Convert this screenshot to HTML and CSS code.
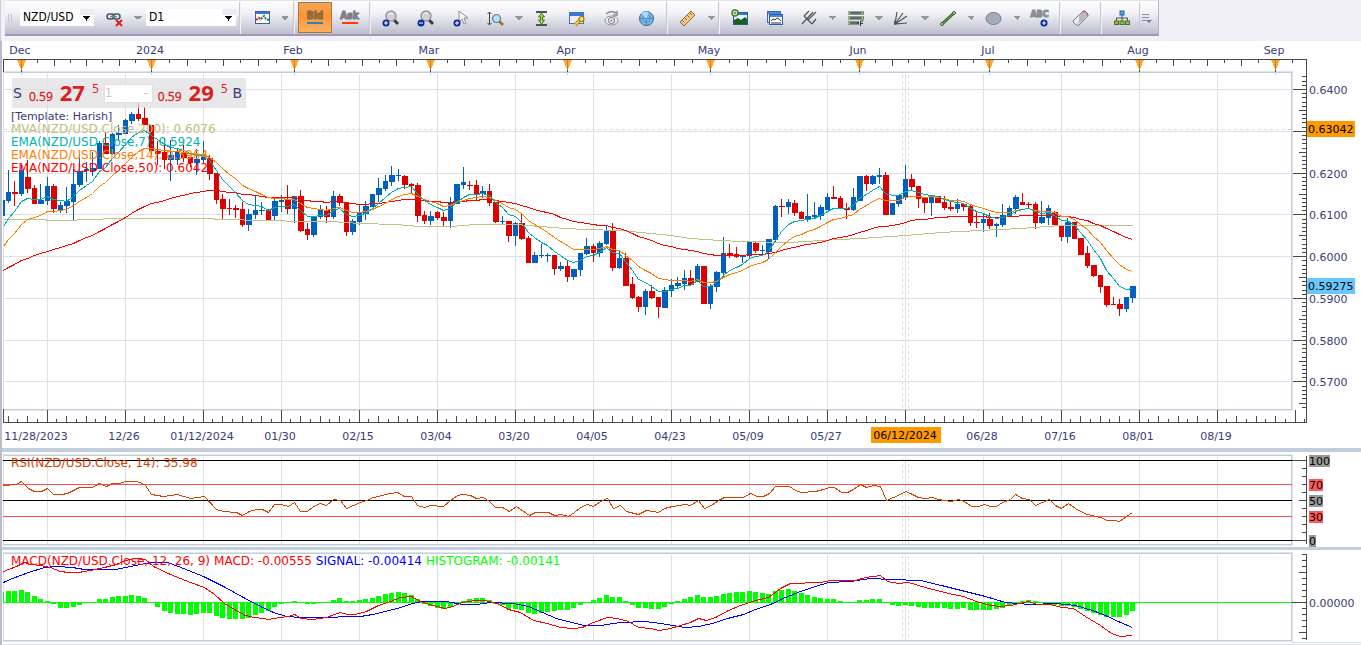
FILE: index.html
```html
<!DOCTYPE html>
<html lang="en">
<head>
<meta charset="utf-8">
<title>NZD/USD D1</title>
<link rel="stylesheet" href="styles.css">
</head>
<body>
<header class="topbar">
<div class="toolbar" role="toolbar" aria-label="Chart tools">
  <span class="grip"></span>
  <select class="picker picker-symbol" aria-label="Symbol"><option>NZD/USD</option></select>
  <button class="tool" aria-label="Unlink"><svg width="20" height="20" viewBox="0 0 20 20"><g fill="none" stroke="#41586a" stroke-width="1.500"><rect x="2" y="6" width="7" height="5" rx="2.500"/><rect x="8" y="6" width="7" height="5" rx="2.500"/></g><path d="M5 8.500h7" stroke="#6e8898" stroke-width="1.500"/><path d="M11 12l6 6M17 12l-6 6" stroke="#e02020" stroke-width="2"/></svg></button>
  <button class="more" aria-label="Link options"></button>
  <select class="picker picker-period" aria-label="Period"><option>D1</option></select>
  <span class="sep wide"></span>
  <button class="tool" aria-label="Chart type"><svg width="20" height="20" viewBox="0 0 20 20"><rect x="3.500" y="3.500" width="14" height="12" fill="#fff" stroke="#41619c"/><path d="M4 4h13v2H4z" fill="#3a78d8"/><path d="M4 12l3-2 2 2" fill="none" stroke="#d02020" stroke-width="2" stroke-dasharray="2 1"/><path d="M9 11l3-3 2 3 3 1" fill="none" stroke="#207030" stroke-width="2" stroke-dasharray="2 1"/></svg></button>
  <button class="more" aria-label="Chart type options"></button>
  <span class="sep wide"></span>
  <button class="side side-on bid">Bid</button>
  <button class="side ask">Ask</button>
  <span class="sep"></span>
  <button class="tool" aria-label="Zoom in"><svg width="20" height="20" viewBox="0 0 20 20"><path d="M12 11l5 5" stroke="#3c3c40" stroke-width="3"/><circle cx="10" cy="8" r="5" fill="#d2d2d4" stroke="#98989c" stroke-width="1.500"/><path d="M7 7q2-3 5-1" stroke="#f4f4f4" fill="none"/><circle cx="5" cy="15" r="3.500" fill="#0a2c98"/><path d="M3 15h4M5 13v4" stroke="#fff"/></svg></button>
  <button class="tool" aria-label="Zoom out"><svg width="20" height="20" viewBox="0 0 20 20"><path d="M12 11l5 5" stroke="#3c3c40" stroke-width="3"/><circle cx="10" cy="8" r="5" fill="#d2d2d4" stroke="#98989c" stroke-width="1.500"/><path d="M7 7q2-3 5-1" stroke="#f4f4f4" fill="none"/><circle cx="5" cy="15" r="3.500" fill="#0a2c98"/><path d="M3 15h4" stroke="#fff"/></svg></button>
  <button class="tool" aria-label="Add pointer"><svg width="20" height="20" viewBox="0 0 20 20"><path d="M8 3v11l3-3 2 5 2-1-2-5h4z" fill="#f4f4f6" stroke="#8e8e96"/><circle cx="6" cy="15" r="3.500" fill="#0a2c98"/><path d="M4 15h4M6 13v4" stroke="#fff"/></svg></button>
  <button class="tool" aria-label="Vertical zoom"><svg width="20" height="20" viewBox="0 0 20 20"><path d="M3.500 5v11M1.500 6l2-2 2 2M1.500 15l2 2 2-2" fill="none" stroke="#404048"/><path d="M13 13l4 4" stroke="#b06a20" stroke-width="2.500"/><circle cx="10.500" cy="10.500" r="4" fill="#b8e0f8" stroke="#52809c" stroke-width="1.200"/></svg></button>
  <button class="more" aria-label="Zoom options"></button>
  <button class="tool" aria-label="Fit height"><svg width="20" height="20" viewBox="0 0 20 20"><path d="M4 4h11M4 17h11" stroke="#48545c" stroke-width="2"/><path d="M9.500 5l3 4h-2v3h2l-3 4-3-4h2V9h-2z" fill="#a4dc40" stroke="#3c7a1c"/></svg></button>
  <button class="tool" aria-label="Chart settings"><svg width="20" height="20" viewBox="0 0 20 20"><rect x="2.500" y="4.500" width="14" height="11" fill="#e8f0fc" stroke="#4c70b0"/><path d="M3 5h13v3H3z" fill="#3a78d8"/><path d="M8 17l6-6" stroke="#a87400" stroke-width="3.500"/><path d="M8 17l6-6" stroke="#f8c840" stroke-width="2"/><circle cx="14.500" cy="11" r="2.500" fill="#fae080" stroke="#a87400" stroke-width="1.200"/></svg></button>
  <button class="tool" aria-label="Refresh view"><svg width="20" height="20" viewBox="0 0 20 20"><path d="M4 6q5-4 10-1M15 3v4h-4" fill="none" stroke="#8a8a90" stroke-width="1.500"/><ellipse cx="9.500" cy="12.500" rx="6.500" ry="4.500" fill="#ececee" stroke="#909096"/><circle cx="9.500" cy="12.500" r="3" fill="none" stroke="#909096" stroke-width="1.200"/><circle cx="9.500" cy="12.500" r="1" fill="#808086"/></svg></button>
  <button class="tool" aria-label="Scanner"><svg width="20" height="20" viewBox="0 0 20 20"><circle cx="9.500" cy="10.500" r="7" fill="#7cbae8" stroke="#2c6094"/><g fill="none" stroke="#4a8cc0"><circle cx="9.500" cy="10.500" r="4"/><path d="M2.500 10.500h14M9.500 3.500v14"/></g><path d="M9.500 10.500L4.500 5.500q3-3 7-1.500z" fill="#b4dcf8"/></svg></button>
  <span class="sep"></span>
  <button class="tool" aria-label="Ruler"><svg width="20" height="20" viewBox="0 0 20 20"><path d="M2 14l11-11 4 4-11 11z" fill="#f0cc88" stroke="#946a2c"/><path d="M7 10l2 2M9.500 7.500l2 2M12 5l2 2M4.500 12.500l2 2" stroke="#7c5820"/></svg></button>
  <button class="more" aria-label="Ruler options"></button>
  <span class="sep"></span>
  <button class="tool" aria-label="Add picture"><svg width="20" height="20" viewBox="0 0 20 20"><rect x="3.500" y="4.500" width="14" height="12" fill="#e4f2ff" stroke="#2a5898"/><path d="M4 5h13v2H4z" fill="#3a78d8"/><path d="M4 16v-4l4-2 3 2 4-3 2 2v5z" fill="#186018"/><circle cx="5" cy="5" r="3" fill="#fff" stroke="#3c8420" stroke-width="1.500"/><path d="M3.500 5h3M5 3.500v3" stroke="#3c8420"/></svg></button>
  <button class="tool" aria-label="Chart windows"><svg width="20" height="20" viewBox="0 0 20 20"><rect x="2.500" y="3.500" width="13" height="11" fill="#dcebfc" stroke="#3a68b4"/><rect x="4.500" y="6.500" width="13" height="10" fill="#fff" stroke="#2c5cac"/><path d="M3 4h12v2H3zM5 7h12v2H5z" fill="#4a88e0"/><path d="M6 13l2-2 2 1 2-2 2 1 2 2M6 15h10" fill="none" stroke="#303038"/></svg></button>
  <button class="tool" aria-label="Pitchfork"><svg width="20" height="20" viewBox="0 0 20 20"><path d="M2 16L13 4M4 8l8 8M4 8l5-5M12 16l4-5M8 12l8-8" fill="none" stroke="#50545c" stroke-width="1.300"/></svg></button>
  <button class="more" aria-label="Pitchfork options"></button>
  <button class="tool" aria-label="Fibonacci lines"><svg width="20" height="20" viewBox="0 0 20 20"><path d="M2 5h16M2 10h16M2 15h11" stroke="#404a44" stroke-width="3"/><path d="M4 5h12M4 10h12M4 15h7" stroke="#7c9080"/><g fill="#b8e860"><circle cx="3" cy="5" r="1"/><circle cx="16.500" cy="5" r="1"/><circle cx="3" cy="10" r="1"/><circle cx="16.500" cy="10" r="1"/><circle cx="3" cy="15" r="1"/></g><path d="M14.500 18v-5h3M14.500 15.500h2.500" fill="none" stroke="#303038"/></svg></button>
  <button class="more" aria-label="Fibonacci options"></button>
  <button class="tool" aria-label="Fan"><svg width="20" height="20" viewBox="0 0 20 20"><path d="M3 16L5 4M3 16l8-11M3 16L15 8M3 16l12-1" fill="none" stroke="#50545c" stroke-width="1.200"/><path d="M2 17v-5l4 4z" fill="#50545c"/></svg></button>
  <button class="more" aria-label="Fan options"></button>
  <button class="tool" aria-label="Line"><svg width="20" height="20" viewBox="0 0 20 20"><path d="M4 16L16 5" stroke="#305c20" stroke-width="3"/><path d="M4 16L16 5" stroke="#84bc50"/><circle cx="4" cy="16" r="1.500" fill="#d0f0a0" stroke="#305c20"/><circle cx="16" cy="5" r="1.500" fill="#d0f0a0" stroke="#305c20"/></svg></button>
  <button class="more" aria-label="Line options"></button>
  <button class="tool" aria-label="Ellipse"><svg width="20" height="20" viewBox="0 0 20 20"><ellipse cx="9.500" cy="10.500" rx="7.500" ry="6" fill="#a2adb8" stroke="#737e8a"/></svg></button>
  <button class="more" aria-label="Shape options"></button>
  <button class="tool label-tool" aria-label="Text label"><span class="abc">ABC</span><svg width="8" height="8" viewBox="0 0 8 8"><circle cx="4" cy="4" r="3.500" fill="#0a2c98"/><path d="M2 4h4M4 2v4" stroke="#fff"/></svg></button>
  <span class="sep"></span>
  <button class="tool" aria-label="Eraser"><svg width="20" height="20" viewBox="0 0 20 20"><path d="M2 13l9-9q2-2 4 0t2 4l-9 9q-2 1-4-1t-2-3z" fill="#ececee" stroke="#7c7c84"/><path d="M8 8l3-4q2-2 4 0t2 4l-4 4-8 5q4-3 3-9z" fill="#b8b8c0"/><path d="M11 4q2-2 4 0t2 4" fill="none" stroke="#a05058"/></svg></button>
  <span class="sep"></span>
  <button class="tool" aria-label="Structure"><svg width="20" height="20" viewBox="0 0 20 20"><path d="M10 6v7M4.500 13v-3h11v3" fill="none" stroke="#505058"/><rect x="8" y="3" width="4" height="4" fill="#4aa4f0" stroke="#2468a8"/><g fill="#90c040" stroke="#4c7020"><rect x="2.500" y="13" width="4" height="3.500"/><rect x="8" y="13" width="4" height="3.500"/><rect x="13.500" y="13" width="4" height="3.500"/></g></svg></button>
  <button class="overflow" aria-label="More tools"><svg width="12" height="12" viewBox="0 0 12 12"><path d="M1 2.500h7M1 5.500h7M1 8.500h4" stroke="#8c8ca4"/><path d="M5 8h6l-3 3z" fill="#74748c"/></svg></button>
</div>
</header>
<main class="terminal">
  <section class="panel panel-price" aria-label="Price chart">
    <svg class="plot" id="price"></svg>
    <div class="overlay">
      <div class="quote">
        <span class="letter">S</span>
        <span class="price"><span class="base">0.59</span><b class="big">27</b><span class="pip">5</span></span>
        <select class="lots" aria-label="Lots"><option>1</option></select>
        <span class="price"><span class="base">0.59</span><b class="big">29</b><span class="pip">5</span></span>
        <span class="letter">B</span>
      </div>
      <div class="legend">
        <span class="navy">[Template: Harish]</span>
        <span class="khaki">MVA(NZD/USD.Close,200): 0.6076</span>
        <span class="teal">EMA(NZD/USD.Close,7): 0.5924</span>
        <span class="orange">EMA(NZD/USD.Close,14): 0.5964</span>
        <span class="red">EMA(NZD/USD.Close,50): 0.6042</span>
      </div>
    </div>
  </section>
  <section class="panel panel-study" aria-label="RSI">
    <svg class="plot" id="rsi"></svg>
    <div class="overlay inline"><span class="rust">RSI(NZD/USD.Close, 14): 35.98</span></div>
  </section>
  <section class="panel panel-study" aria-label="MACD">
    <svg class="plot" id="macd"></svg>
    <div class="overlay inline"><span class="red">MACD(NZD/USD.Close, 12, 26, 9)</span><span class="red">MACD: -0.00555</span><span class="blue">SIGNAL: -0.00414</span><span class="lime">HISTOGRAM: -0.00141</span></div>
  </section>
</main>
<script src="chart.js"></script>
</body>
</html>
```

FILE: styles.css
```css
body {
  margin: 0;
  background: #fff;
  color: #3a3a78;
  font-family: "DejaVu Sans", Verdana, sans-serif;
  font-size: 12px;
  line-height: 13px;
  overflow: hidden;
}
button, select { font: inherit; color: inherit; margin: 0; padding: 0; border: 0; background: none; }
select { appearance: none; border-radius: 0; }

.topbar { display: flex; height: 41px; padding-left: 4px; background: #f0f0f6; box-sizing: border-box; border-left: 1px solid #d0cedc; }
.toolbar {
  display: flex;
  flex: none;
  align-items: center;
  box-sizing: border-box;
  height: 36px;
  padding-right: 4px;
  background: linear-gradient(#fefeff, #f2f2f7 35%, #d6d6e2 70%, #bdbdcd);
  border-top: 1px solid #e4e4ec;
  border-right: 1px solid #b4b2c8;
  border-bottom: 2px solid #9c9ab4;
}
.toolbar button, .toolbar select, .toolbar span { flex: none; }
.grip { width: 9px; height: 8px; margin: 0 3px; background: repeating-linear-gradient(90deg, #c4c4d0 0 1px, transparent 1px 3px) no-repeat 0 0 / 6px 8px; }
.picker {
  height: 17px;
  padding-left: 3px;
  color: #000;
  font-family: "DejaVu Sans Condensed", "DejaVu Sans", sans-serif;
  font-size: 12px;
  line-height: 17px;
  background: linear-gradient(#000, #000) no-repeat right 7px top 8px / 1px 4px,
    linear-gradient(#000, #000) no-repeat right 6px top 7px / 3px 3px,
    linear-gradient(#000, #000) no-repeat right 5px top 7px / 5px 2px,
    linear-gradient(#000, #000) no-repeat right 4px top 7px / 7px 1px,
    linear-gradient(90deg, #ecebf3, #ecebf3) no-repeat right top / 14px 6px,
    #fff;
}
.picker-symbol { width: 74px; margin-right: 3px; }
.picker-period { width: 90px; margin-left: 3px; }
.tool { display: flex; align-items: center; justify-content: center; width: 35px; height: 30px; }
.more { width: 11px; height: 30px; background: conic-gradient(from 315deg at 50% 100%, #96949f 0 90deg, transparent 0) no-repeat center / 8px 4px; }
.sep { width: 6px; height: 32px; background: linear-gradient(90deg, #c6c5d4 1px, #f2f2f8 1px) no-repeat center / 2px 32px; }
.sep.wide { width: 8px; }
.side { width: 35px; height: 31px; color: #a4a4a6; font-family: "DejaVu Sans Condensed", sans-serif; font-weight: bold; font-size: 10px; line-height: 10px; -webkit-text-stroke: 1px #77777b; }
.side::after { content: ""; display: block; height: 2px; width: 16px; margin: 1px auto 0; background: #ff3c00; }
.side-on { width: 34px; box-sizing: border-box; color: #b08050; -webkit-text-stroke-color: #8a6438; background: linear-gradient(#f4a458, #ff9434 45%, #ffb060); border: 1px solid #a87840; }
.side-on::after { background: #1888c8; }
.label-tool { flex-direction: column; }
.abc { color: #9a9aa0; font-size: 8px; line-height: 8px; padding-top: 3px; font-weight: bold; -webkit-text-stroke: 1px #88888e; }
.label-tool svg { margin-left: 8px; }
.overflow { width: 15px; height: 32px; display: flex; align-items: center; justify-content: center; border-left: 1px solid #c6c5d4; }

.terminal { border-left: 2px solid #bcbacd; }
.panel { position: relative; border-bottom: 3px solid #c3cedd; }
.panel-price { height: 407px; border-bottom-width: 4px; }
.panel-study { height: 95px; }
.panel-study:last-child { border-bottom: 0; }
.plot { display: block; width: 100%; height: 100%; font-size: 11px; }
.overlay { position: absolute; left: 9px; top: 37px; }
.inline { top: 5px; display: flex; gap: 4px; white-space: pre; }
.quote { display: flex; align-items: center; gap: 5px; height: 30px; width: 232px; margin-left: 1px; padding: 0 1px; background: rgba(222, 222, 225, .7); }
.letter { width: 11px; font-size: 14px; }
.price { display: flex; align-items: center; color: #d82020; font-family: "Open Sans", "Noto Sans", sans-serif; gap: 7px; }
.base { font-size: 12px; line-height: 12px; padding-top: 8px; -webkit-text-stroke: 0.3px #d82020; }
.big { font-size: 22px; line-height: 26px; padding-bottom: 3px; }
.pip { font-size: 12px; line-height: 12px; padding-bottom: 8px; }
.lots { flex: none; width: 49px; height: 19px; color: #c8c8cc; background: linear-gradient(#ccc, #ccc) no-repeat right 4px center / 4px 1px, #fff; border: 1px solid #e0e0e4; }
.legend { display: flex; flex-direction: column; margin-top: 2px; white-space: pre; }
.navy { color: #3a3a78; }
.khaki { color: #c0c080; }
.teal { color: #00b4b4; }
.orange { color: #ff8000; }
.red { color: #ff0000; }
.rust { color: #d84000; }
.blue { color: #0000ff; }
.lime { color: #00ff00; }
.legend .navy { font-size: 11px; }
```

FILE: chart.js
```js
// Candles: high, body top, body bottom, low (screen rows), direction.
const candles = `200 200 216 216 u|170 192 201 203 u|181 192 194 206 d|165 170 194 196 u|160 177 189 193 d|185 188 204 204 d|184 200 204 204 u
177 186 201 205 u|184 186 209 213 d|202 205 211 213 u|187 201 206 213 u|169 184 202 220 u|154 171 185 187 u|162 169 171 182 u|152 168 171 176 u|141 143 169 169 u|133 143 154 154 d
133 134 154 155 u|125 133 135 141 u|119 120 134 134 u|112 114 121 124 u|103 114 119 121 d|107 118 125 125 d|125 125 151 155 d|141 151 154 165 d|138 152 160 169 d|140 155 160 181 u
149 151 160 165 u|145 152 158 162 d|157 157 163 167 d|149 159 163 175 u|141 157 160 164 u|155 158 174 180 d|173 173 200 204 d|194 199 209 219 d|199 208 209 215 d|205 208 210 218 d
202 209 225 227 d|209 214 225 231 u|196 210 215 219 u|202 210 211 215 u|209 209 220 220 d|198 201 216 221 u|195 200 202 212 u|185 199 209 214 d|196 196 209 223 u|190 196 231 232 d
223 229 235 240 d|216 217 235 237 u|205 210 217 219 u|206 210 217 223 d|191 196 217 219 u|194 196 203 206 d|202 202 232 236 d|219 221 232 235 u|205 212 222 225 u|201 206 214 220 u
194 194 207 207 u|178 188 195 202 u|175 181 189 191 u|166 175 182 186 u|169 175 176 181 u|175 176 185 189 d|183 184 186 193 d|183 185 216 222 d|211 215 221 224 d|211 216 221 225 u
211 212 218 220 d|212 217 221 226 d|197 202 221 228 u|184 184 204 204 u|167 182 185 189 u|181 185 186 190 d|180 185 194 200 d|186 191 194 198 u|184 191 203 206 d|202 202 222 223 d
216 221 222 224 u|221 221 236 242 d|222 223 236 246 u|213 223 239 240 d|236 238 263 263 d|252 255 263 263 u|244 255 256 258 u|253 255 256 262 u|255 255 269 275 d|262 266 269 271 u
260 266 277 282 d|269 269 277 280 u|253 253 270 276 u|238 246 254 255 u|244 246 253 262 d|241 243 253 257 u|225 231 244 245 u|223 231 268 271 d|251 258 268 269 u|253 258 286 286 d
277 284 298 299 d|296 297 307 312 d|289 291 307 315 u|285 291 298 299 d|297 297 307 318 d|287 290 308 308 u|279 285 291 297 u|277 283 286 289 u|270 278 284 290 u|270 278 285 285 d
264 266 282 282 u|266 266 304 304 d|284 286 304 309 u|271 272 287 292 u|237 253 273 277 u|244 253 256 258 d|247 254 257 258 d|255 255 257 263 u|242 242 256 259 u|241 243 251 253 d
245 250 251 254 u|239 239 252 259 u|205 206 240 242 u|199 206 207 217 d|199 202 207 214 u|200 203 213 216 d|211 212 219 219 d|194 216 220 222 u|202 215 217 219 u|205 207 216 220 u
193 197 210 210 u|186 197 199 199 d|196 198 209 209 d|203 208 210 219 d|188 197 210 211 u|176 176 201 201 u|175 176 184 191 d|175 176 184 185 u|168 175 177 184 u|172 175 215 215 d
203 203 215 215 u|195 195 204 207 u|165 179 198 200 u|174 179 187 190 d|186 186 199 208 d|197 197 203 213 d|195 195 203 216 u|196 196 203 203 d|196 202 208 210 d|201 207 209 211 d
199 204 209 213 u|203 204 207 211 d|205 206 223 226 d|212 222 223 228 d|214 219 223 232 u|213 219 226 229 d|223 224 226 237 u|204 215 225 227 u|206 208 216 216 u|195 197 209 214 u
193 202 205 205 d|202 204 205 209 d|202 204 223 229 d|201 217 223 224 u|205 208 218 225 u|211 212 225 225 d|225 225 237 241 d|218 222 237 243 u|222 222 239 239 d|238 238 255 255 d
246 253 266 268 d|265 265 276 277 d|275 275 287 293 d|286 286 305 307 d|297 304 305 305 d|299 304 309 316 d|297 297 309 312 u|286 286 298 303 u`
  .split(/[|\n]/).map(s => { const p = s.trim().split(" "); return { h: +p[0], t: +p[1], b: +p[2], l: +p[3], up: p[4] === "u" }; });

const histogram = [10,11,11,12,10,6,3,1,-1,-5,-5,-4,-2,0,0,3,3,5,6,6,7,6,4,0,-4,-8,-10,-11,-11,-12,-11,-10,-10,-13,-15,-16,-16,-16,-15,-12,-10,-8,-4,-1,0,1,0,-1,-1,0,0,2,
  4,1,1,2,3,4,6,8,9,10,9,7,3,-1,-3,-5,-6,-4,-1,1,3,4,4,2,-1,-2,-6,-6,-7,-10,-11,-10,-9,-8,-7,-7,-5,-2,0,2,4,7,5,5,1,-2,-5,-5,-6,-6,-4,-1,1,3,5,7,5,5,6,8,9,10,
  10,11,10,9,8,11,12,13,11,9,7,5,4,3,3,1,0,0,2,2,3,3,0,-2,-3,-2,-3,-4,-5,-5,-5,-5,-6,-6,-5,-7,-7,-7,-7,-6,-5,-2,0,1,2,1,0,-2,-2,-3,-3,-4,-6,-8,-10,-12,-14,-14,-14,-12,-8];

const mvaPath = "3,219 44,219 48,220 75,220 78,219 128,218 212,218 216,219 270,220 300,221 330,221 360,223 395,224 420,226 450,226 475,224 515,224 540,226 565,228 585,229 620,230 640,232 670,235 690,238 720,240 740,241 790,242 820,240 860,238 905,235 940,232 980,230 1020,228 1060,225 1132,225";
const rsiPath = "3,485 16,484 21,481 28,488 34,491 41,491 47,488 53,494 61,494 67,493 79,487 92,487 99,483 106,486 112,483 119,483 125,481 134,481 140,482 145,485 151,494 163,496 177,494 190,498 204,496 216,509 223,511 236,512 242,515 249,511 256,509 262,509 268,512 274,504 281,504 288,506 294,502 300,511 307,511 313,506 320,503 326,505 333,499 340,500 346,508 360,502 366,500 373,497 390,493 397,492 404,496 411,496 417,505 424,507 430,505 443,506 450,500 457,495 463,494 470,495 476,498 483,497 489,501 495,507 502,507 509,511 516,506 529,515 535,512 548,512 554,515 561,514 568,516 574,512 580,507 587,504 593,506 600,501 607,498 613,508 620,505 626,511 638,514 646,510 658,512 664,508 672,506 685,504 690,505 698,500 704,508 711,505 718,500 724,497 734,497 743,497 750,493 757,496 763,496 769,493 775,486 789,486 795,490 801,492 815,491 823,489 829,487 834,487 841,492 847,492 853,489 860,484 866,487 873,485 880,486 886,500 893,497 900,494 905,491 910,493 918,497 925,498 932,497 938,499 944,500 951,501 958,499 964,501 971,506 978,506 984,504 990,506 996,506 1002,502 1010,499 1015,494 1022,498 1029,499 1035,505 1042,502 1049,499 1055,505 1061,508 1068,503 1075,508 1080,511 1087,514 1100,517 1107,520 1114,520 1119,521 1126,516 1132,512";
const macdPath = "3,571 16,566 24,562 30,564 40,565 50,567 60,571 68,572 78,572 90,570 104,567 116,564 125,560 134,558 145,559 153,566 170,574 190,582 204,587 214,594 224,603 234,609 245,615 254,617 262,618 268,619 279,617 288,616 294,614 301,618 312,619 326,617 334,614 340,612 347,614 355,614 366,611 378,605 390,601 400,597 411,596 420,601 432,605 445,608 452,606 462,602 475,600 484,600 497,603 508,609 520,612 533,620 547,623 560,627 573,628 582,627 593,622 607,617 617,618 628,621 638,627 650,628 659,630 670,628 680,625 690,622 698,618 706,620 715,617 728,610 740,605 755,600 768,597 780,588 790,583 820,582 830,580 855,580 865,577 880,575 887,581 898,583 908,582 925,587 948,593 963,596 976,601 990,605 1000,606 1010,605 1028,601 1037,604 1050,604 1061,607 1073,608 1085,616 1100,625 1111,633 1120,636 1132,635";
const signalPath = "3,582 12,578 28,572 44,567 56,566 72,567 84,569 115,569 125,567 145,563 155,562 167,562 178,566 203,576 223,586 243,597 262,607 273,612 286,616 300,617 330,617 345,616 360,616 372,614 385,611 400,607 412,603 422,601 446,601 462,604 476,604 490,602 513,603 528,606 542,612 556,618 571,622 584,625 600,625 620,622 645,621 660,623 672,625 685,627 698,626 712,623 727,618 743,614 755,609 770,604 785,597 800,591 815,586 828,582 850,581 870,578 890,579 920,580 945,586 965,591 985,596 1005,602 1030,604 1055,603 1075,605 1092,610 1105,615 1120,622 1132,627";

const GRID = "#e0e0e0", AXIS = "#484848", FRAME = "#c3cedd";
const columnX = i => Math.floor(47 + 6.5 * (i - 7));
const columnWidth = i => (i % 2 ? 5 : 6);

const rect = (x, y, w, h, fill) => `<rect x="${x}" y="${y}" width="${w}" height="${h}" fill="${fill}"/>`;
const hline = (x1, x2, y, c) => rect(x1, y, x2 - x1, 1, c);
const vline = (x, y1, y2, c) => rect(x, y1, 1, y2 - y1, c);
const curve = (pts, c) => `<polyline points="${pts}" transform="translate(.5 .5)" fill="none" stroke="${c}"/>`;
const label = (x, y, s, anchor = "start", c = "#3a3a78") => `<text x="${x}" y="${y}" text-anchor="${anchor}" fill="${c}">${s}</text>`;

function dashed(x1, y1, x2, y2) {
  return `<path d="M${x1} ${y1}L${x2} ${y2}" stroke="#dcdcdc" stroke-dasharray="3 3" fill="none"/>`;
}

function frame(right, top, bottom) {
  let s = "";
  for (let x = 47; x < right; x += 78) s += vline(x, top + 2, bottom, GRID);
  s += vline(3, top, bottom, GRID);
  s += hline(3, right + 1, top - 1, "#dfe3ea") + hline(3, right, top, FRAME) + hline(3, right, bottom, FRAME) + hline(3, right + 1, bottom + 1, "#e4e6ee");
  s += vline(right - 1, top, bottom, FRAME) + vline(right, top, bottom + 1, "#e0e0ea");
  return s + dashed(902.5, top + 3, 902.5, bottom) + dashed(908.5, top + 3, 908.5, bottom);
}

function ema(n, seed) {
  const a = 2 / (n + 1);
  let v = seed;
  return candles.map((c, i) => {
    if (i) v += a * ((c.up ? c.t : c.b - 1) - v);
    return `${Math.max(3, columnX(i))},${Math.round(v)}`;
  }).join(" ");
}

function mount(id, top, draw) {
  const svg = document.getElementById(id);
  const w = svg.clientWidth, h = svg.clientHeight;
  svg.setAttribute("viewBox", `2 ${top} ${w} ${h}`);
  const axis = w + 2 - 55;
  svg.innerHTML = `<g shape-rendering="crispEdges">${draw(axis, axis - 14)}</g>`;
}

function drawPrice(axis, right) {
  let s = "";
  const rows = [[89, "0.6400"], [131, ""], [173, "0.6200"], [214, "0.6100"], [256, "0.6000"], [298, "0.5900"], [340, "0.5800"], [381, "0.5700"]];
  for (const [y, t] of rows) {
    s += hline(3, right - 2, y, GRID) + hline(right, axis, y, AXIS);
    if (t) s += label(axis + 3, y + 5, t);
  }
  s += frame(right, 72, 409) + dashed(4, 129.5, right, 129.5);
  for (let i = -3; i < 77; i++) {
    const y = Math.round(89 + i * 4.18);
    if (i % 10) s += hline(axis - (i % 5 ? 4 : 7), axis, y, AXIS);
  }
  s += vline(axis, 59, 423, AXIS) + hline(3, axis + 1, 59, AXIS) + hline(3, axis + 1, 422, AXIS) + vline(3, 59, 72, AXIS) + vline(3, 409, 423, AXIS);

  const months = [[21, "Dec"], [151, "2024"], [294, "Feb"], [430, "Mar"], [567, "Apr"], [710, "May"], [859, "Jun"], [989, "Jul"], [1139, "Aug"], [1275, "Sep"], [1412, ""]];
  months.forEach(([x, t], m) => {
    if (!t) return;
    const step = (months[m + 1][0] - x) / 8;
    for (let j = 1; j < 8; j++) {
      const tx = Math.round(x + step * j);
      if (tx < axis) s += vline(tx, 60, j % 2 ? 63 : 66, AXIS);
    }
    s += `<path d="M${x - 4} 60h9l-4 9h-1z" fill="#ffa830"/>` + vline(x, 60, 70, "#d08020") + vline(x, 70, 72, AXIS) + vline(x, 72, 75, FRAME);
    s += label(x - 1, 54, t, "middle");
  });

  const dates = ["11/28/2023", "12/26", "01/12/2024", "01/30", "02/15", "03/04", "03/20", "04/05", "04/23", "05/09", "05/27", "", "06/28", "07/16", "08/01", "08/19"];
  for (let j = -4; 47 + j * 9.75 < axis; j++) {
    const x = Math.floor(47 + j * 9.75);
    s += vline(x, j % 8 ? (j % 2 ? 419 : 416) : 410, 422, AXIS);
  }
  dates.forEach((t, i) => { s += label(i ? 46 + 78 * i : 36, 440, t, "middle"); });
  s += rect(871, 427, 70, 16, "#ff9900") + label(905, 439, "06/12/2024", "middle", "#000");

  candles.forEach((c, i) => {
    const x = columnX(i), color = c.up ? "#0060c0" : "#dc0000";
    if (i) s += vline(x, c.h, c.l, color);
    const left = Math.max(3, x - 2);
    s += rect(left, c.t, x - 2 + columnWidth(i) - left, c.b - c.t, color);
  });
  s += curve(mvaPath, "#c0c080") + curve(ema(50, 270), "#ff0000") + curve(ema(14, 246), "#ff8000") + curve(ema(7, 226), "#00b0b0");
  s += rect(axis + 1, 121, 48, 16, "#ff9900") + label(axis + 2, 133, "0.63042", "start", "#000");
  s += rect(axis + 1, 278, 48, 16, "#66c8ff") + label(axis + 2, 290, "0.59275", "start", "#000");
  return s;
}

function drawRsi(axis, right) {
  let s = frame(right, 455, 544);
  for (const y of [460, 500, 540]) s += hline(3, right, y, "#000");
  for (const y of [484, 516]) s += hline(3, right, y, "#ff5050");
  s += vline(axis, 456, 544, AXIS);
  for (let y = 460; y <= 540; y += 8) s += hline(y % 80 === 60 ? right : y === 500 ? axis - 7 : axis - 4, axis, y, AXIS);
  s += hline(right, axis, 460, AXIS) + hline(axis - 7, axis, 500, AXIS);
  for (const [y, t, w, c] of [[460, "100", 21, "#999"], [484, "70", 14, "#ff5858"], [500, "50", 14, "#999"], [516, "30", 14, "#ff5858"], [540, "0", 7, "#999"]]) {
    s += rect(axis + 3, y - 5, w, 12, c) + label(axis + 3, y + 5, t, "start", "#000");
  }
  return s + curve(rsiPath, "#d84000");
}

function drawMacd(axis, right) {
  let s = frame(right, 553, 640);
  histogram.forEach((v, i) => {
    const x = columnX(i), left = Math.max(3, x - 2);
    if (v) s += rect(left, v > 0 ? 602 - v : 602, x - 2 + 5 - left, Math.abs(v) + (v < 0 ? 1 : 0), "#00ff00");
  });
  s += hline(3, right, 602, "#00ff00") + curve(signalPath, "#0000ff") + curve(macdPath, "#ff0000");
  s += vline(axis, 554, 640, AXIS) + hline(right, axis, 602, AXIS) + label(axis + 3, 607, "0.00000");
  for (let j = -8; j <= 6; j++) if (j) s += hline(axis - (j % 5 ? 4 : 7), axis, Math.round(602 + j * 5.95), AXIS);
  return s + hline(right, axis + 60, 642, "#d8d8e6") + hline(3, axis + 60, 644, "#e0e0ea");
}

function drawAll() {
  mount("price", 41, drawPrice);
  mount("rsi", 452, drawRsi);
  mount("macd", 550, drawMacd);
}
drawAll();
addEventListener("resize", drawAll);
```
